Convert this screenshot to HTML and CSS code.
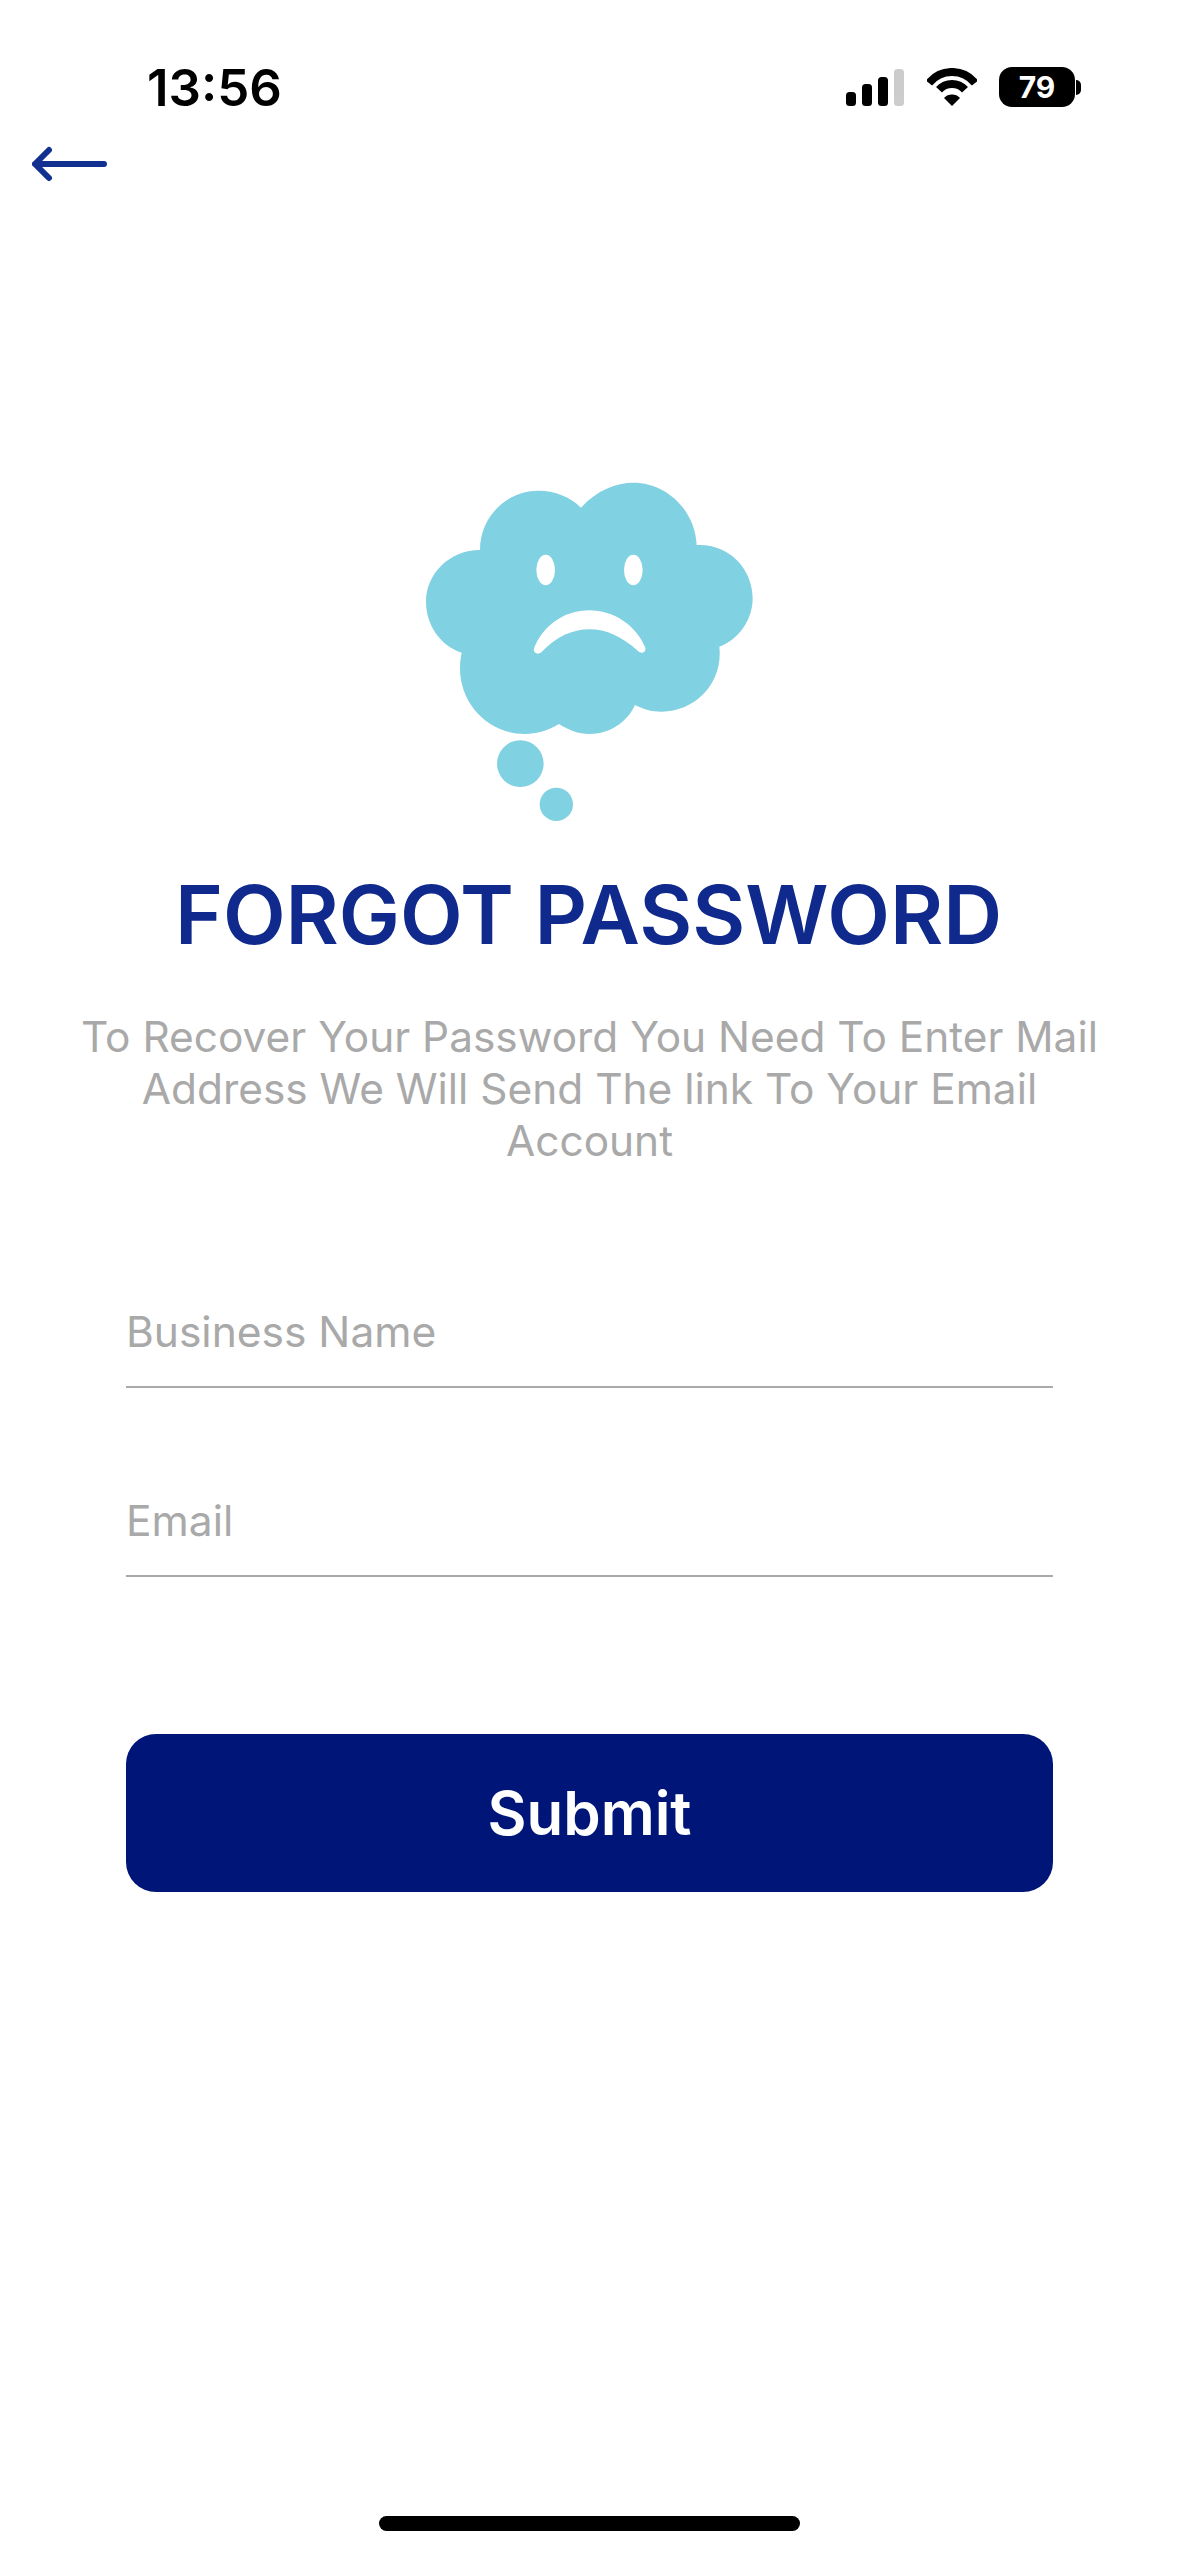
FILE: index.html
```html
<!DOCTYPE html>
<html lang="en">
<head>
  <meta charset="UTF-8" />
  <title>Forgot Password</title>
  <link rel="stylesheet" href="styles.css">
</head>
<body>
  <div class="status-bar">
    <span class="time">13:56</span>
    <div class="status-icons">
      <svg class="signal" width="58" height="37" viewBox="0 0 58 37">
        <rect x="0" y="23" width="10" height="14" rx="3.5" fill="#000"/>
        <rect x="16" y="15" width="10" height="22" rx="3.5" fill="#000"/>
        <rect x="32" y="8" width="10" height="29" rx="3.5" fill="#000"/>
        <rect x="48" y="0" width="10" height="37" rx="3.5" fill="#ccc"/>
      </svg>
      <svg class="wifi" width="50" height="38" viewBox="0 0 50 38">
        <path d="M2 15 A29.500 29.500 0 0 1 48 15" fill="none" stroke="#000" stroke-width="8"/>
        <path d="M12 21.800 A17.500 17.500 0 0 1 38 21.800" fill="none" stroke="#000" stroke-width="8"/>
        <path d="M17 30 A11 11 0 0 1 33 30 L25 38 Z" fill="#000"/>
      </svg>
      <div class="battery"><span class="battery-level">79</span><span class="battery-cap"></span></div>
    </div>
  </div>

  <a href="#" class="back-btn" aria-label="Back">
    <svg width="76" height="36" viewBox="0 0 76 36">
      <path d="M17 4 L3 18 L17 32 M3 18 H72" fill="none" stroke="#12308f" stroke-width="6" stroke-linecap="round" stroke-linejoin="round"/>
    </svg>
  </a>

  <div class="container">
    <svg class="sad-cloud" width="380" height="380" viewBox="0 0 1140 1140">
      <path d="M543 143 C590 90 650 68 700 68 C800 68 885 150 890 255 C985 250 1058 325 1058 415 C1058 480 1015 540 958 560 C970 670 885 755 785 755 C755 755 730 748 705 735 C680 790 625 822 568 822 C535 822 505 810 477 792 C445 812 410 822 375 822 C268 822 180 735 180 625 C180 608 182 592 185 578 C122 558 78 495 78 425 C78 340 150 270 240 270 C240 170 320 92 415 92 C465 92 510 110 543 143 Z" fill="#80d1e1"/>
      <ellipse cx="437" cy="330" rx="28" ry="46" fill="#fff"/>
      <ellipse cx="700" cy="330" rx="28" ry="46" fill="#fff"/>
      <path d="M402 565 C430 495 495 451 568 451 C640 451 708 495 736 563 C739 577 723 583 714 573 C665 530 620 508 568 508 C516 508 470 530 424 577 C414 586 398 578 402 565 Z" fill="#fff"/>
      <circle cx="361" cy="911" r="70" fill="#80d1e1"/>
      <circle cx="469" cy="1033" r="50" fill="#80d1e1"/>
    </svg>

    <h1>FORGOT PASSWORD</h1>
    <p class="intro">To Recover Your Password You Need To Enter Mail Address We Will Send The link To Your Email Account</p>

    <form class="forgot-form">
      <input type="text" class="field" placeholder="Business Name" />
      <input type="text" class="field" placeholder="Email" />
      <button type="button" class="submit-btn">Submit</button>
    </form>
  </div>

  <div class="home-indicator"></div>
</body>
</html>
```

FILE: styles.css
```css
* {
  box-sizing: border-box;
}

html, body {
  height: 100%;
}

body {
  font-family: Inter, "Liberation Sans", sans-serif;
  background-color: #fff;
  margin: 0;
  height: 2556px;
  display: flex;
  flex-direction: column;
  overflow: hidden;
}


.status-bar {
  height: 108px;
  padding: 60px 104px 0 147px;
  display: flex;
  justify-content: space-between;
  align-items: flex-start;
}

.time {
  font-size: 51px;
  font-weight: 600;
  line-height: 56px;
  color: #000;
}

.status-icons {
  display: flex;
  align-items: flex-start;
  margin-top: 7px;
}

.signal {
  margin-top: 2px;
}

.wifi {
  margin-left: 23px;
  margin-top: 1px;
}

.battery {
  position: relative;
  width: 76px;
  height: 40px;
  margin-left: 22px;
  background-color: #000;
  border-radius: 13px;
  color: #fff;
  font-size: 30px;
  font-weight: 700;
  line-height: 40px;
  text-align: center;
}

.battery-cap {
  position: absolute;
  right: -6px;
  top: 13px;
  width: 5px;
  height: 15px;
  background-color: #000;
  border-radius: 0 8px 8px 0;
}


.back-btn {
  display: block;
  width: 76px;
  height: 36px;
  margin: 38px 0 0 32px;
}

.back-btn svg {
  display: block;
}


.container {
  padding: 0 60px;
  text-align: center;
}

.sad-cloud {
  display: block;
  margin: 278px auto 0;
}

h1 {
  margin: 30px -2px 0 -4px;
  font-size: 81.6px;
  font-weight: 600;
  line-height: 90px;
  color: #0f298c;
}

.intro {
  margin: 51px 0 0;
  font-size: 42.4px;
  font-weight: 400;
  line-height: 52px;
  color: #a9a9a9;
}


.forgot-form {
  margin: 0 66px;
  padding-top: 139px;
  display: flex;
  flex-direction: column;
}

.field {
  width: 100%;
  height: 82px;
  padding: 0 0 29px;
  border: none;
  border-bottom: 2px solid #aaa;
  font-family: inherit;
  font-size: 42.5px;
  color: #333;
  margin-bottom: 107px;
  outline: none;
}

.field::placeholder {
  color: #a9a9a9;
  opacity: 1;
}

.submit-btn {
  margin-top: 50px;
  height: 158px;
  border: none;
  border-radius: 30px;
  background-color: #001578;
  color: #fff;
  font-family: inherit;
  font-size: 60px;
  font-weight: 600;
}


.home-indicator {
  width: 421px;
  height: 15px;
  margin: auto auto 25px;
  background-color: #000;
  border-radius: 8px;
}
```
